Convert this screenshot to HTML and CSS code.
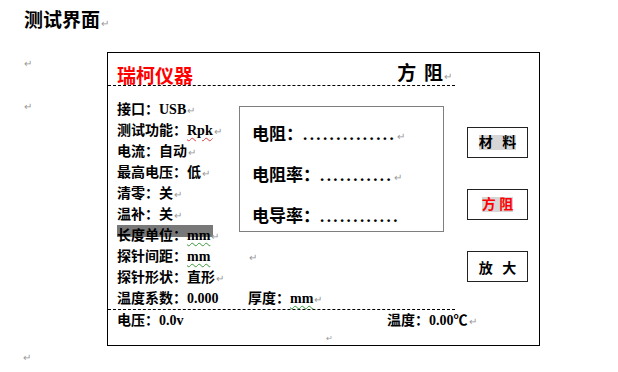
FILE: index.html
```html
<!DOCTYPE html>
<html>
<head>
  <title>测试界面</title>
  <link rel="stylesheet" href="styles.css">
</head>
<body>
  <p class="title">测试界面<span class="pm">↵</span></p>

  <div class="row">
    <div class="marks">
      <span class="pm">↵</span>
      <span class="pm">↵</span>
    </div>

    <div class="panel">
      <div class="main">
        <div class="head">
          <span class="brand">瑞柯仪器</span>
          <span class="mode">方 阻<span class="pm">↵</span></span>
        </div>

        <div class="body">
          <ul class="params">
            <li>接口：USB<span class="pm">↵</span></li>
            <li>测试功能：<span class="typo">Rpk</span><span class="pm">↵</span></li>
            <li>电流：自动<span class="pm">↵</span></li>
            <li>最高电压：低<span class="pm">↵</span></li>
            <li>清零：关<span class="pm">↵</span></li>
            <li>温补：关<span class="pm">↵</span></li>
            <li class="marked">长度单位：<span class="gram">mm</span><span class="pm">↵</span></li>
            <li><span class="cell">探针间距：<span class="gram">mm</span></span><span class="pm">↵</span></li>
            <li>探针形状：直形<span class="pm">↵</span></li>
            <li><span class="cell">温度系数：0.000</span>厚度：<span class="gram">mm</span><span class="pm">↵</span></li>
          </ul>

          <div class="readout">
            <p>电阻：<span class="dots">..............</span><span class="pm">↵</span></p>
            <p>电阻率：<span class="dots">...........</span><span class="pm">↵</span></p>
            <p>电导率：<span class="dots">............</span></p>
          </div>
        </div>

        <div class="foot">
          <span class="cell wide">电压：0.0v</span>温度：0.00℃<span class="pm">↵</span>
        </div>
        <div class="end"><span class="pm tiny">↵</span></div>
      </div>

      <div class="side">
        <div class="btn"><span class="hl">材 料</span></div>
        <div class="btn red"><span class="hl">方 阻</span></div>
        <div class="btn"><span>放 大</span></div>
      </div>
    </div>
  </div>

  <p class="last"><span class="pm">↵</span></p>
</body>
</html>
```

FILE: styles.css
```css
body {
  margin: 0;
  background: #fff;
  color: #000;
  font-family: "Liberation Serif", "Noto Sans CJK SC", serif;
  font-weight: bold;
}
p { margin: 0; }

.pm { color: #999; font-size: 10px; font-weight: normal; margin-left: 1px; }

.title { margin: 11px 0 0 24px; height: 19px; font-size: 19px; line-height: 19px; }

.row { display: flex; padding-left: 24px; margin-top: 22px; }
.marks { width: 83px; display: flex; flex-direction: column; }
.marks .pm { margin: 6px 0 0; height: 12px; line-height: 12px; }
.marks .pm + .pm { margin-top: 31px; }

.panel {
  display: flex;
  box-sizing: border-box;
  width: 433px; height: 294px;
  border: 1px solid #000;
}
.main { width: 347px; }

.head {
  display: flex; align-items: flex-end;
  height: 16px;
  padding: 16px 0 0 9px;
  line-height: 16px; font-size: 19px;
  border-bottom: 1px dashed #000;
}
.brand { color: #f00; }
.mode { margin-left: auto; margin-right: 3px; word-spacing: 3px; }

.body {
  display: flex;
  padding-top: 13px;
  border-bottom: 1px dashed #000;
}
.params {
  list-style: none; margin: 0; padding: 0 0 0 9px;
  width: 122px;
  font-size: 14px; line-height: 21px; white-space: nowrap;
}
.params li { height: 21px; }
.marked {
  background: linear-gradient(#787878, #787878) no-repeat 0 -4px / 96px 16px;
}
.cell { display: inline-block; width: 131px; }
.cell.wide { width: 270px; }
.typo { text-decoration: underline wavy #e04040; text-decoration-thickness: 1px; text-underline-offset: 2px; }
.gram { text-decoration: underline wavy #3a9a3a; text-decoration-thickness: 1px; text-underline-offset: 2px; }

.readout {
  box-sizing: border-box;
  width: 205px; height: 126px;
  margin-top: 7px;
  padding: 7px 0 0 12px;
  border: 1px solid #7f7f7f;
  font-size: 17px; line-height: 41px; white-space: nowrap;
}
.readout p { height: 41px; }
.dots { letter-spacing: 2.4px; }

.foot { height: 20px; padding-left: 9px; font-size: 14px; line-height: 21px; white-space: nowrap; }
.end { height: 12px; padding-left: 217px; line-height: 12px; }
.tiny { font-size: 8px; }

.side {
  display: flex; flex-direction: column; gap: 31px;
  padding: 74px 0 0 12px;
}
.btn {
  box-sizing: border-box;
  width: 61px; height: 31px;
  border: 1px solid #222;
  display: flex; align-items: center; justify-content: center;
  font-size: 14px; word-spacing: 6px;
}
.hl { background: #d6d6d6; line-height: 15px; }
.red { color: #f00; }
.red .hl { word-spacing: 0; }

.last { margin: 4px 0 0 22px; height: 12px; line-height: 12px; }
```
